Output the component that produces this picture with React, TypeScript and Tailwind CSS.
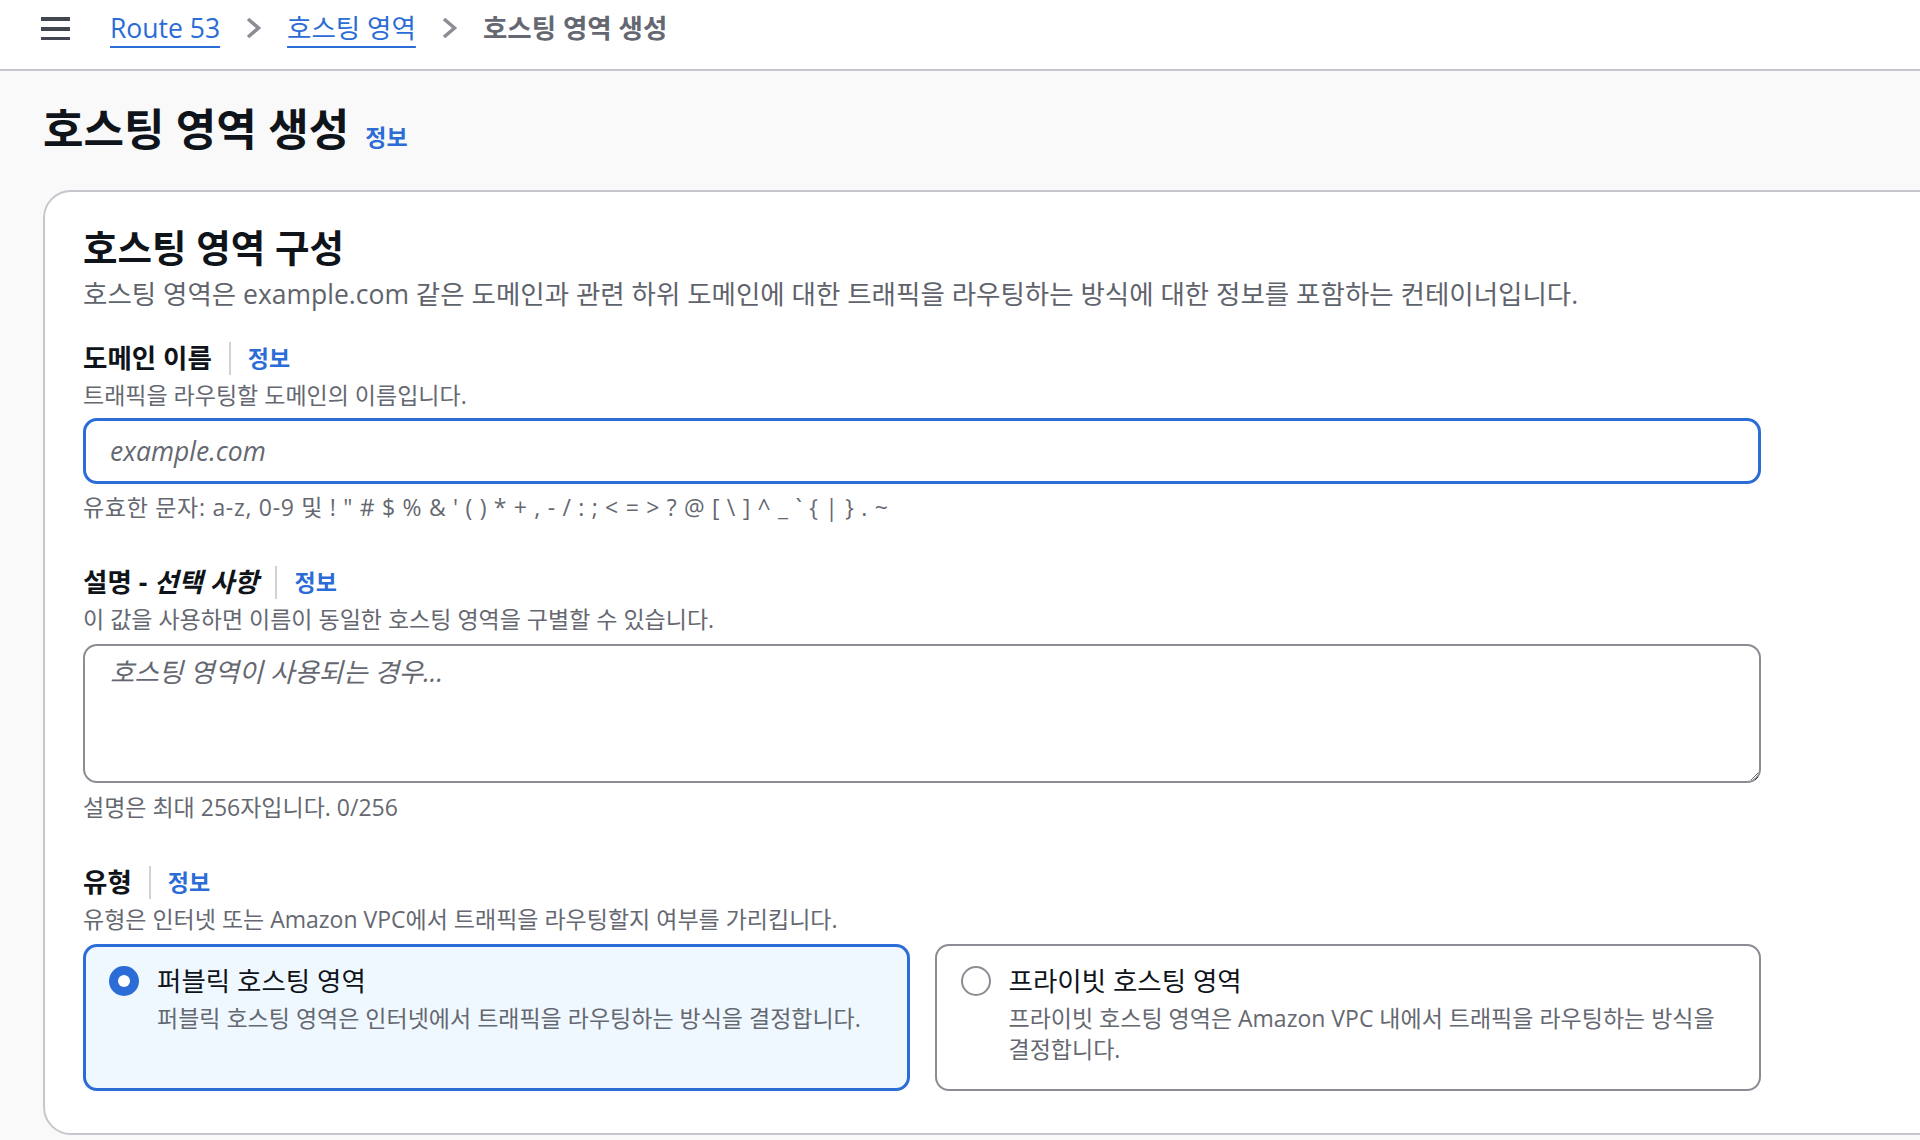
import React from 'react';

const Chevron: React.FC = () => (
  <svg width="17" height="22" viewBox="0 0 17 22" className="shrink-0">
    <path d="M3 2 L13.5 11 L3 20" fill="none" stroke="#8c8c94" strokeWidth="3.5" />
  </svg>
);

const InfoLink: React.FC = () => (
  <a className="text-[23px] font-bold leading-[32px] text-[#2b6cd6] cursor-pointer">정보</a>
);

const FieldLabel: React.FC<{ children: React.ReactNode }> = ({ children }) => (
  <div className="flex items-center h-[32px]">
    <span className="text-[26.5px] font-bold leading-[32px] text-[#0f141a]">{children}</span>
    <span className="mx-[17px] h-[33px] w-[2px] bg-[#d1d1d6]" />
    <InfoLink />
  </div>
);

const Hint: React.FC<{ children: React.ReactNode; className?: string }> = ({ children, className = '' }) => (
  <p className={`text-[23px] leading-[28px] text-[#656871] ${className}`}>{children}</p>
);

const App: React.FC = () => {
  return (
    <div className="h-[1140px] w-full overflow-hidden bg-[#f9f9fa] font-['Open_Sans','Noto_Sans_CJK_KR',sans-serif] text-[#0f141a]">
      {/* top breadcrumb bar */}
      <header className="h-[71px] bg-white border-b-2 border-[#c6c6cd] pl-[41px] pt-[12px]">
        <div className="flex items-center h-[32px] gap-[25px] text-[26.5px] leading-[32px]">
          <svg width="29" height="24" viewBox="0 0 29 24" className="mr-[15px] shrink-0">
            <rect x="0" y="1" width="29" height="4" fill="#424650" />
            <rect x="0" y="11" width="29" height="4" fill="#424650" />
            <rect x="0" y="21" width="29" height="4" fill="#424650" />
          </svg>
          <a className="text-[#2b6cd6] underline decoration-2 underline-offset-[8px] cursor-pointer">Route 53</a>
          <Chevron />
          <a className="text-[#2b6cd6] underline decoration-2 underline-offset-[8px] cursor-pointer">호스팅 영역</a>
          <Chevron />
          <span className="font-bold text-[#656871]">호스팅 영역 생성</span>
        </div>
      </header>

      <main className="pl-[43px] pt-[36px]">
        <div className="flex items-baseline gap-[16px]">
          <h1 className="text-[44px] font-bold leading-[44px]">호스팅 영역 생성</h1>
          <InfoLink />
        </div>

        <section className="mt-[37px] w-[1920px] rounded-[28px] border-2 border-[#c6c6cd] bg-white pl-[38px] pt-[35px] pb-[42px]">
          <div className="w-[1678px]">
            <h2 className="text-[37.5px] font-bold leading-[42px]">호스팅 영역 구성</h2>
            <p className="mt-[9px] text-[26.5px] leading-[32px] text-[#5f636c]">
              호스팅 영역은 example.com 같은 도메인과 관련 하위 도메인에 대한 트래픽을 라우팅하는 방식에 대한 정보를 포함하는 컨테이너입니다.
            </p>

            {/* domain name */}
            <div className="mt-[32px]">
              <FieldLabel>도메인 이름</FieldLabel>
              <Hint className="mt-[7px]">트래픽을 라우팅할 도메인의 이름입니다.</Hint>
              <input
                type="text"
                placeholder="example.com"
                className="mt-[9px] block w-full h-[66px] rounded-[14px] border-[3px] border-[#2b6cd6] bg-white px-[24px] text-[26.5px] outline-none placeholder:italic placeholder:text-[#656871]"
              />
              <Hint className="mt-[9px] tracking-[0.7px]">유효한 문자: a-z, 0-9 및 ! " # $ % &amp; ' ( ) * + , - / : ; &lt; = &gt; ? @ [ \ ] ^ _ ` {'{'} | {'}'} . ~</Hint>
            </div>

            {/* description */}
            <div className="mt-[45px]">
              <FieldLabel>
                설명 - <i>선택 사항</i>
              </FieldLabel>
              <Hint className="mt-[7px]">이 값을 사용하면 이름이 동일한 호스팅 영역을 구별할 수 있습니다.</Hint>
              <textarea
                placeholder="호스팅 영역이 사용되는 경우..."
                className="mt-[11px] block w-full h-[139px] rounded-[14px] border-2 border-[#8c8c94] bg-white px-[25px] pt-[10px] text-[26.5px] leading-[32px] outline-none resize-y placeholder:italic placeholder:text-[#656871]"
              />
              <Hint className="mt-[10px]">설명은 최대 256자입니다. 0/256</Hint>
            </div>

            {/* type */}
            <div className="mt-[45px]">
              <FieldLabel>유형</FieldLabel>
              <Hint className="mt-[7px]">유형은 인터넷 또는 Amazon VPC에서 트래픽을 라우팅할지 여부를 가리킵니다.</Hint>
              <div className="mt-[11px] grid grid-cols-2 gap-[25px]">
                <div className="h-[147px] rounded-[14px] border-[3px] border-[#2b6cd6] bg-[#f0f8ff] pl-[23px] pr-[24px] pt-[18px] flex gap-[18px]">
                  <div className="h-[32px] flex items-center shrink-0">
                    <span className="w-[30px] h-[30px] rounded-full bg-[#2b6cd6] flex items-center justify-center">
                      <span className="w-[12px] h-[12px] rounded-full bg-white" />
                    </span>
                  </div>
                  <div>
                    <div className="text-[26.5px] leading-[32px] text-[#0f141a]">퍼블릭 호스팅 영역</div>
                    <p className="mt-[6px] text-[23px] leading-[31px] text-[#656871] break-keep">
                      퍼블릭 호스팅 영역은 인터넷에서 트래픽을 라우팅하는 방식을 결정합니다.
                    </p>
                  </div>
                </div>
                <div className="h-[147px] rounded-[14px] border-2 border-[#8c8c94] bg-white pl-[24px] pr-[25px] pt-[19px] flex gap-[18px]">
                  <div className="h-[32px] flex items-center shrink-0">
                    <span className="w-[30px] h-[30px] rounded-full border-2 border-[#8c8c94] bg-white" />
                  </div>
                  <div>
                    <div className="text-[26.5px] leading-[32px] text-[#0f141a]">프라이빗 호스팅 영역</div>
                    <p className="mt-[6px] text-[23px] leading-[31px] text-[#656871] break-keep">
                      프라이빗 호스팅 영역은 Amazon VPC 내에서 트래픽을 라우팅하는 방식을 결정합니다.
                    </p>
                  </div>
                </div>
              </div>
            </div>
          </div>
        </section>
      </main>
    </div>
  );
};

export default App;
